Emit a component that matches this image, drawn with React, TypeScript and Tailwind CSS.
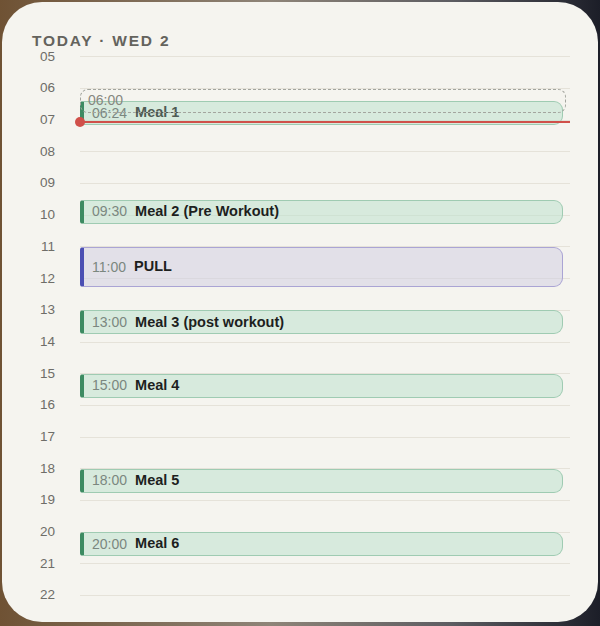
import React from 'react';

const HOUR = 31.7;
const hours = Array.from({ length: 18 }, (_, i) => 5 + i);

// y offset inside the grid for a given time (hours as decimal)
const yAt = (t: number) => HOUR / 2 + (t - 5) * HOUR;

interface CalEvent {
  id: string;
  start: number;
  label: string;
  title: string;
  height: number;
  kind: 'meal' | 'workout';
  done?: boolean;
}

const events: CalEvent[] = [
  { id: 'm1', start: 6.4, label: '06:24', title: 'Meal 1', height: 24, kind: 'meal', done: true },
  { id: 'm2', start: 9.5, label: '09:30', title: 'Meal 2 (Pre Workout)', height: 24, kind: 'meal' },
  { id: 'pull', start: 11, label: '11:00', title: 'PULL', height: 40, kind: 'workout' },
  { id: 'm3', start: 13, label: '13:00', title: 'Meal 3 (post workout)', height: 24, kind: 'meal' },
  { id: 'm4', start: 15, label: '15:00', title: 'Meal 4', height: 24, kind: 'meal' },
  { id: 'm5', start: 18, label: '18:00', title: 'Meal 5', height: 24, kind: 'meal' },
  { id: 'm6', start: 20, label: '20:00', title: 'Meal 6', height: 24, kind: 'meal' },
];

const EventBlock: React.FC<{ ev: CalEvent }> = ({ ev }) => {
  const isMeal = ev.kind === 'meal';
  return (
    <div
      className={
        isMeal
          ? 'absolute left-[48px] w-[483px] flex items-center gap-[8px] pl-[8px] rounded-l-[3px] rounded-r-[9px] border border-l-[4px] border-[#9fcbb2] border-l-[#3d8b62] bg-[rgba(190,225,205,0.55)]'
          : 'absolute left-[48px] w-[483px] flex items-center gap-[8px] pl-[8px] rounded-l-[3px] rounded-r-[9px] border border-l-[4px] border-[#aaa4d4] border-l-[#4b4fb3] bg-[rgba(210,208,225,0.55)]'
      }
      style={{ top: yAt(ev.start), height: ev.height }}
    >
      <span className="text-[14px] text-[#7b877f]">{ev.label}</span>
      <span
        className={
          ev.done
            ? 'text-[14.5px] font-bold text-[#4f5b54] line-through'
            : 'text-[14.5px] font-bold text-[#1d1f1e]'
        }
      >
        {ev.title}
      </span>
    </div>
  );
};

export default function App() {
  return (
    <div className="w-[600px] h-[626px] bg-[linear-gradient(90deg,#6f5234_0%,#8e8478_45%,#5d5d62_75%,#1c1e28_100%)] pt-[2px] px-[2px] pb-[4px]">
      <div className="h-full rounded-[40px] bg-[#f5f4ef] pl-[30px] pr-[28px] pt-[30px] font-['Liberation_Sans',Arial,sans-serif]">
        <h1 className="text-[15.5px] leading-[18px] font-bold tracking-[0.115em] text-[#64635d]">
          TODAY · WED 2
        </h1>

        {/* Hour grid */}
        <div className="relative mt-[-9px]">
          {hours.map((h) => (
            <div key={h} className="flex items-center h-[31.7px]">
              <span className="w-[23px] text-right text-[13.5px] text-[#6e6d68]">
                {String(h).padStart(2, '0')}
              </span>
              <div className="ml-[25px] flex-1 h-px bg-[#e5e2d9]" />
            </div>
          ))}

          {events.map((ev) => (
            <EventBlock key={ev.id} ev={ev} />
          ))}

          {/* planned slot outline */}
          <div
            className="absolute left-[48px] w-[486px] h-[24px] flex items-center pl-[7px] rounded-[8px] border-[1.5px] border-dashed border-[#a3a59e]"
            style={{ top: yAt(6) }}
          >
            <span className="text-[14px] text-[#86877f]">06:00</span>
          </div>

          {/* current time */}
          <div
            className="absolute left-[48px] right-0 h-[2px] bg-[#d0504a]"
            style={{ top: yAt(7.05) - 1 }}
          >
            <div className="absolute left-[-5px] top-[-4px] w-[10px] h-[10px] rounded-full bg-[#d0504a]" />
          </div>
        </div>
      </div>
    </div>
  );
}
